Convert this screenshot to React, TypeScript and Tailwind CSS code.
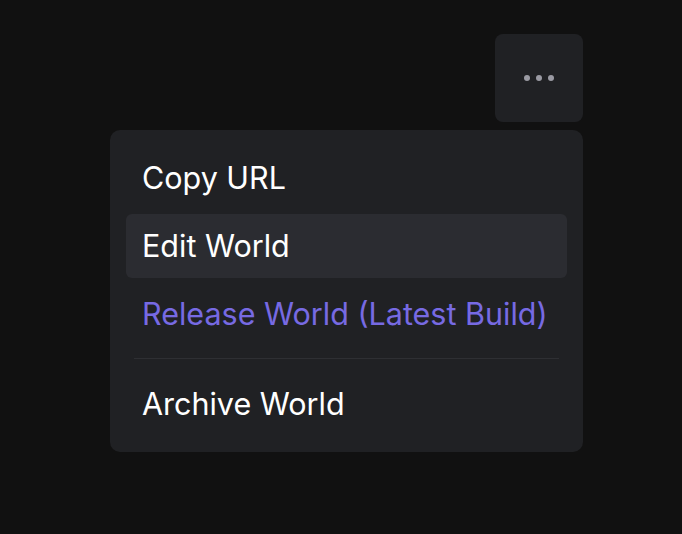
const items = [
  { label: 'Copy URL' },
  { label: 'Edit World', active: true },
  { label: 'Release World (Latest Build)', accent: true },
];

export default function App() {
  return (
    <div
      className="min-h-screen w-full bg-[#111111] pt-[34px]"
      style={{ fontFamily: 'Inter, "Noto Sans", sans-serif' }}
    >
      <div className="ml-[110px] flex w-[473px] flex-col items-end gap-2">
        <button className="flex h-[88px] w-[88px] items-center justify-center gap-[6px] rounded-lg bg-[#202124]">
          <span className="h-[6px] w-[6px] rounded-full bg-[#9a9aa3]" />
          <span className="h-[6px] w-[6px] rounded-full bg-[#9a9aa3]" />
          <span className="h-[6px] w-[6px] rounded-full bg-[#9a9aa3]" />
        </button>
        <div className="flex w-full flex-col gap-1 rounded-[10px] bg-[#202124] p-4">
          {items.map((it) => (
            <div
              key={it.label}
              className={
                'flex h-16 items-center rounded-md px-4 text-[30.5px] ' +
                (it.active ? 'bg-[#2b2c31] ' : '') +
                (it.accent ? 'text-[#776ae3]' : 'text-white')
              }
            >
              {it.label}
            </div>
          ))}
          <div className="mx-2 mt-2 mb-[9px] h-px bg-[#2e2f33]" />
          <div className="flex h-16 items-center rounded-md px-4 text-[30.5px] text-white">
            Archive World
          </div>
        </div>
      </div>
    </div>
  );
}
